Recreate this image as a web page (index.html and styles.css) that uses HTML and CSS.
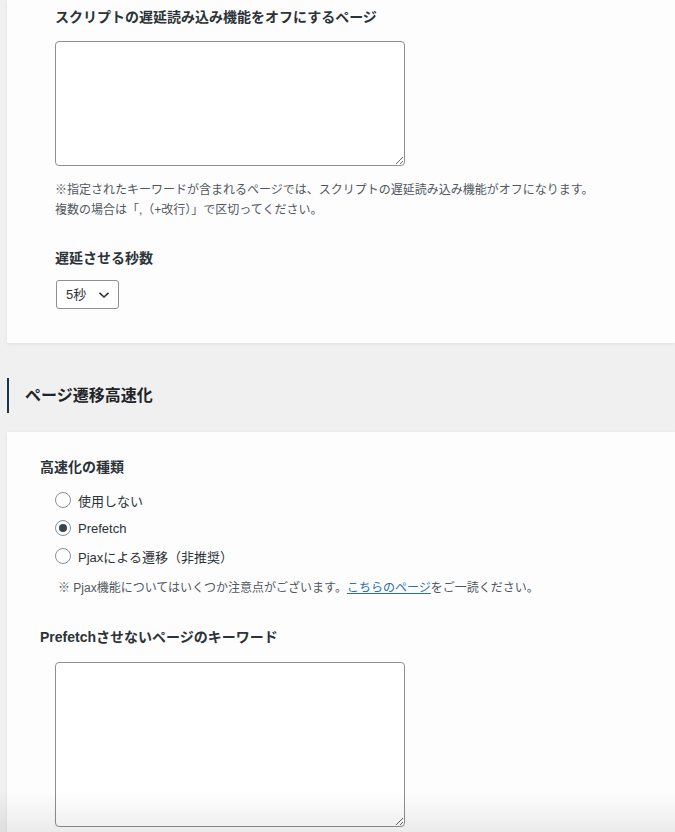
FILE: index.html
```html
<!DOCTYPE html>
<html lang="ja">
<head>
  <meta charset="UTF-8">
  <title>高速化設定</title>
  <meta name="viewport" content="width=device-width, initial-scale=1.0">
  <link rel="stylesheet" href="styles.css">
</head>
<body>
  <div class="page">
    <div class="card card-first">
      <div class="field nested">
        <label class="field-label" for="delayOff">スクリプトの遅延読み込み機能をオフにするページ</label>
        <textarea id="delayOff" class="area area-short"></textarea>
        <p class="note">※指定されたキーワードが含まれるページでは、スクリプトの遅延読み込み機能がオフになります。<br>複数の場合は「,（+改行）」で区切ってください。</p>
      </div>

      <div class="field nested field-gap">
        <label class="field-label" for="delaySec">遅延させる秒数</label>
        <span class="select-wrap">
          <select id="delaySec" class="select">
            <option>3秒</option>
            <option selected>5秒</option>
            <option>10秒</option>
          </select>
          <svg class="chev" width="12" height="8" viewBox="0 0 12 8"><path d="M1.5 1.8 L6 6 L10.5 1.8" fill="none" stroke="#2c3338" stroke-width="1.6"/></svg>
        </span>
      </div>
    </div>

    <h2 class="section-title">ページ遷移高速化</h2>

    <div class="card">
      <div class="field">
        <div class="field-label">高速化の種類</div>
        <div class="radios">
          <label class="radio-row"><input type="radio" name="speed" class="radio"> 使用しない</label>
          <label class="radio-row"><input type="radio" name="speed" class="radio" checked> Prefetch</label>
          <label class="radio-row"><input type="radio" name="speed" class="radio"> Pjaxによる遷移（非推奨）</label>
        </div>
        <p class="note note-indent">※ Pjax機能についてはいくつか注意点がございます。<a href="#">こちらのページ</a>をご一読ください。</p>
      </div>

      <div class="field field-gap2">
        <label class="field-label" for="noPrefetch">Prefetchさせないページのキーワード</label>
        <textarea id="noPrefetch" class="area area-tall indent"></textarea>
      </div>
    </div>
  </div>
  <div class="bottom-fade"></div>
</body>
</html>
```

FILE: styles.css
```css
body {
  margin: 0;
  background: #f0f0f1;
  color: #1d2327;
  font-family: "Liberation Sans", "Noto Sans CJK JP", sans-serif;
  font-size: 13px;
}
.page {
  padding-left: 7px;
}
.card {
  background: #fdfdfd;
  box-shadow: 0 1px 3px rgba(0, 0, 0, 0.08);
  padding: 25px 0 40px 33px;
}
.card-first {
  padding-top: 7px;
  padding-bottom: 34px;
}
.nested {
  padding-left: 15px;
}
.field-label {
  display: block;
  font-size: 14px;
  line-height: 20px;
  font-weight: bold;
  color: #2c3338;
}
.area {
  display: block;
  width: 350px;
  box-sizing: border-box;
  border: 1px solid #8c8f94;
  border-radius: 4px;
  background: #fff;
  margin: 14px 0 0;
  padding: 6px 8px;
  font-family: inherit;
}
.area-short {
  height: 125px;
}
.area-tall {
  height: 165px;
  margin-top: 15px;
}
.indent {
  margin-left: 15px;
}
.note {
  margin: 14px 0 0;
  font-size: 12px;
  line-height: 20px;
  color: #50575e;
}
.note a {
  color: #2271b1;
  text-decoration: underline;
}
.note-indent {
  margin-top: 8px;
  padding-left: 18px;
}
.field-gap {
  margin-top: 28px;
}
.field-gap2 {
  margin-top: 29px;
}
.select-wrap {
  position: relative;
  display: inline-block;
  margin-top: 12px;
  margin-left: 1px;
}
.select {
  appearance: none;
  -webkit-appearance: none;
  width: 63px;
  height: 29px;
  box-sizing: border-box;
  border: 1px solid #8c8f94;
  border-radius: 3px;
  background: #fff;
  padding: 0 0 0 9px;
  font-family: inherit;
  font-size: 13px;
  color: #2c3338;
}
.chev {
  position: absolute;
  right: 9px;
  top: 11px;
  pointer-events: none;
}
.section-title {
  margin: 35px 0 19px;
  height: 35px;
  line-height: 35px;
  border-left: 2px solid #16354d;
  padding-left: 16px;
  font-size: 16px;
  font-weight: bold;
  color: #1d2327;
}
.radios {
  margin-top: 9px;
  padding-left: 15px;
}
.radio-row {
  display: flex;
  align-items: center;
  gap: 7px;
  height: 28px;
  font-size: 13px;
  color: #2c3338;
}
.radio {
  appearance: none;
  -webkit-appearance: none;
  width: 16px;
  height: 16px;
  margin: 0;
  border: 1px solid #8c8f94;
  border-radius: 50%;
  background: #fff;
  display: grid;
  place-items: center;
}
.radio:checked::before {
  content: "";
  width: 8px;
  height: 8px;
  border-radius: 50%;
  background: #3c434a;
}
.bottom-fade {
  position: fixed;
  left: 0;
  right: 0;
  bottom: 0;
  height: 40px;
  background: linear-gradient(rgba(0, 0, 0, 0), rgba(0, 0, 0, 0.07));
  pointer-events: none;
}
```
